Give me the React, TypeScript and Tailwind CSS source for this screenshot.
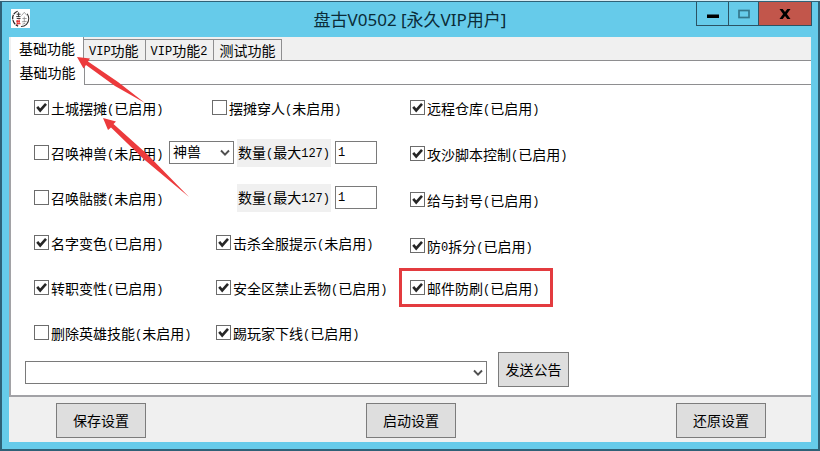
import { useState } from 'react'
import type { ReactNode } from 'react'

type Option = { id: string; label: string; checked: boolean }

const mainTabs = ['基础功能', 'VIP功能', 'VIP功能2', '测试功能']

const remoteOptions: Option[] = [
  { id: 'warehouse', label: '远程仓库(已启用)', checked: true },
  { id: 'script', label: '攻沙脚本控制(已启用)', checked: true },
  { id: 'title', label: '给与封号(已启用)', checked: true },
  { id: 'split', label: '防0拆分(已启用)', checked: true },
]

// Latin runs use a half-width mono face next to the full-width characters
function Mixed({ text }: { text: string }) {
  return (
    <>
      {text.split(/([\x20-\x7e]+)/).map((part, i) =>
        i % 2 ? (
          <span key={i} className="align-[1px] font-['Liberation_Mono',monospace] text-[12px] leading-none">{part}</span>
        ) : (
          part
        )
      )}
    </>
  )
}

function Check({ id, label, checked }: Option) {
  const [on, setOn] = useState(checked)
  return (
    <label htmlFor={id} className="flex items-center gap-[2px] whitespace-nowrap">
      <span className="relative block size-[15px] shrink-0">
        <input
          id={id}
          type="checkbox"
          checked={on}
          onChange={() => setOn(!on)}
          className="block size-[15px] appearance-none border border-[#6c6c6c] bg-white"
        />
        {on && (
          <svg viewBox="0 0 15 15" className="pointer-events-none absolute inset-0 size-[15px]">
            <path d="M3.2 6.8 L6.2 10.4 L12 3.8" fill="none" stroke="#262626" strokeWidth="2.6" />
          </svg>
        )}
      </span>
      <span>
        <Mixed text={label} />
      </span>
    </label>
  )
}

function Combo({ label, className, children }: { label: string; className: string; children?: ReactNode }) {
  return (
    <div className={`relative shrink-0 ${className}`}>
      <select
        aria-label={label}
        className="block h-[23px] w-full appearance-none border border-[#7a7a7a] bg-white pb-[3px] pl-[3px] leading-[18px]"
      >
        {children}
      </select>
      <svg viewBox="0 0 10 8" className="pointer-events-none absolute top-[8px] right-[4px] h-[8px] w-[10px]">
        <path d="M1 1.5 L5 5.7 L9 1.5" fill="none" stroke="#505050" strokeWidth="1.9" />
      </svg>
    </div>
  )
}

function Amount({ id }: { id: string }) {
  return (
    <div className="flex items-center gap-[4px]">
      <label htmlFor={id} className="h-[28px] w-[94px] bg-[#f0f0f0] pl-px leading-[26px] whitespace-nowrap">
        <Mixed text="数量(最大127)" />
      </label>
      <input
        id={id}
        type="text"
        defaultValue="1"
        className="h-[23px] w-[42px] border border-[#7a7a7a] bg-white px-[2px] font-['Liberation_Mono',monospace] text-[12px]"
      />
    </div>
  )
}

function PushButton({ className, children }: { className: string; children: ReactNode }) {
  return (
    <button type="button" className={`h-[35px] border border-[#7c7c7c] bg-[#dedede] pb-[2px] ${className}`}>
      {children}
    </button>
  )
}

export default function App() {
  const [tab, setTab] = useState(0)

  return (
    <div className="relative min-h-screen bg-[#d8ebf2] pt-px font-['Noto_Sans_CJK_SC',sans-serif] text-[14px] leading-[20px] text-black">
      <div className="flex min-h-[450px] flex-col border-x-2 border-t border-b-2 border-[#2f6177] bg-[#66cbea] px-[7px] pb-[7px]">
        {/* Title bar */}
        <header className="relative flex h-[35px] items-center justify-center">
          <svg viewBox="0 0 20 20" className="absolute top-[7px] left-[2px] size-[19px]">
            <rect width="20" height="20" fill="#fff" />
            <path d="M7 2.4 C2.5 4 .8 8 2.2 12.2 C3 15 5 17 7.5 18" fill="none" stroke="#222" strokeWidth="1.3" strokeDasharray="5 .8" />
            <path d="M10.5 18.4 C15 18.5 18.8 15 18.7 10 C18.6 8 18 6.4 17 5" fill="none" stroke="#333" strokeWidth="1.1" />
            <path d="M6 5.5h4M8 3.5v5M5.5 8h4.5M6 10h4" stroke="#333" strokeWidth="1" />
            <path d="M6.5 11.5v5M5.5 13h4M8.5 11v5M6 15.5h4" stroke="#d22" strokeWidth="1.1" />
            <path d="M11 7l3-3.5 3 3.500M12 10h4.500M14 8v6M11.500 13.500l5-.5M12 16l3-1" fill="none" stroke="#888" strokeWidth=".8" />
          </svg>
          <h1 className="font-['Noto_Sans','Noto_Sans_CJK_SC',sans-serif] text-[17px] text-[#0b2c38]">
            盘古V0502 [永久VIP用户]
          </h1>
          <div className="absolute top-0 -right-px flex h-[24px] border border-t-0 border-[#2b5364]">
            <button type="button" aria-label="最小化" className="flex w-[32px] items-center justify-center border-r border-[#2b5364]">
              <svg viewBox="0 0 12 12" className="size-[12px]">
                <rect x="0" y="6.5" width="12" height="3.5" />
              </svg>
            </button>
            <button type="button" aria-label="最大化" className="flex w-[30px] items-center justify-center border-r border-[#2b5364]">
              <svg viewBox="0 0 12 10" className="h-[10px] w-[12px]">
                <rect x="1" y="1.5" width="10" height="7" fill="none" stroke="#34778d" strokeWidth="1.7" />
              </svg>
            </button>
            <button type="button" aria-label="关闭" className="flex w-[52px] items-center justify-center bg-[#c2564b]">
              <svg viewBox="0 0 12 10" className="h-[10px] w-[12px]">
                <path d="M.5 0h3.2L6 3 8.3 0h3.2L7.9 5l3.6 5H8.3L6 7 3.7 10H.5L4.1 5z" />
              </svg>
            </button>
          </div>
        </header>

        <main className="flex flex-1 flex-col bg-[#f0f0f0]">
          {/* Main tabs */}
          <nav className="flex h-[24px] items-end border-b border-[#8e8e90] pl-[2px]">
            {mainTabs.map((name, i) => (
              <button
                key={name}
                type="button"
                onClick={() => setTab(i)}
                className={
                  i === tab
                    ? '-mb-px h-[24px] w-[73px] border-r border-[#8e8e90] bg-white pb-[3px]'
                    : 'h-[21px] border-t border-r border-[#8e8e90] pr-[6px] pb-px pl-[5px]'
                }
              >
                <Mixed text={name} />
              </button>
            ))}
          </nav>

          <section className="border-b-2 border-l-2 border-[#a2a2a6] bg-white">
            <div className="flex h-[24px] border-b border-[#8e8e90]">
              <button type="button" className="h-[24px] w-[74px] border-r border-[#8e8e90] bg-white pb-[2px]">
                基础功能
              </button>
            </div>

            <div className="flex pt-[15px] pl-[23px]">
              <div className="flex w-[376px] shrink-0 flex-col gap-[30px]">
                <div className="flex h-[15px] items-center">
                  <div className="w-[178px]">
                    <Check id="stall" label="土城摆摊(已启用)" checked />
                  </div>
                  <Check id="pass" label="摆摊穿人(未启用)" checked={false} />
                </div>
                <div className="flex h-[15px] items-center">
                  <div className="w-[135px]">
                    <Check id="beast" label="召唤神兽(未启用)" checked={false} />
                  </div>
                  <Combo label="召唤类型" className="mr-[3px] w-[65px]">
                    <option>神兽</option>
                  </Combo>
                  <Amount id="beast-max" />
                </div>
                <div className="flex h-[15px] items-center">
                  <div className="w-[203px]">
                    <Check id="skeleton" label="召唤骷髅(未启用)" checked={false} />
                  </div>
                  <Amount id="skeleton-max" />
                </div>
                <div className="flex h-[15px] items-center">
                  <div className="w-[182px]">
                    <Check id="name" label="名字变色(已启用)" checked />
                  </div>
                  <Check id="kill" label="击杀全服提示(未启用)" checked />
                </div>
                <div className="flex h-[15px] items-center">
                  <div className="w-[182px]">
                    <Check id="job" label="转职变性(已启用)" checked />
                  </div>
                  <Check id="drop" label="安全区禁止丢物(已启用)" checked />
                </div>
                <div className="flex h-[15px] items-center">
                  <div className="w-[182px]">
                    <Check id="skill" label="删除英雄技能(未启用)" checked={false} />
                  </div>
                  <Check id="kick" label="踢玩家下线(已启用)" checked />
                </div>
              </div>

              <div className="flex flex-col items-start gap-[31px]">
                {remoteOptions.map((o) => (
                  <div key={o.id} className="flex h-[15px] items-center">
                    <Check {...o} />
                  </div>
                ))}
                <div className="-mt-4 -ml-[11px] flex h-[39px] w-[154px] items-center border-3 border-[#e33b3f] pl-[8px]">
                  <Check id="mail" label="邮件防刷(已启用)" checked />
                </div>
              </div>
            </div>

            {/* Announcement */}
            <div className="flex items-center gap-[11px] pt-3 pb-2 pl-[14px]">
              <Combo label="公告内容" className="mt-[5px] w-[462px]" />
              <PushButton className="w-[71px]">发送公告</PushButton>
            </div>
          </section>

          <footer className="flex justify-between pt-[6px] pr-[45px] pb-[4px] pl-[47px]">
            <PushButton className="w-[90px]">保存设置</PushButton>
            <PushButton className="w-[90px]">启动设置</PushButton>
            <PushButton className="w-[90px]">还原设置</PushButton>
          </footer>
        </main>
      </div>

      {/* Pointer arrows */}
      <svg viewBox="0 0 200 200" className="pointer-events-none absolute top-0 left-0 size-[200px]" fill="#ec3a3c">
        <path d="M77 57 L90 58.5 L88 61.5 L118 82 L145 103 L115 86 L86 65 L83.5 68.5 Z" />
        <path d="M103 118 L116 121.5 L113.5 124 L147 154 L189 197 L143 158.5 L111 127.5 L108 130 Z" />
      </svg>
    </div>
  )
}
